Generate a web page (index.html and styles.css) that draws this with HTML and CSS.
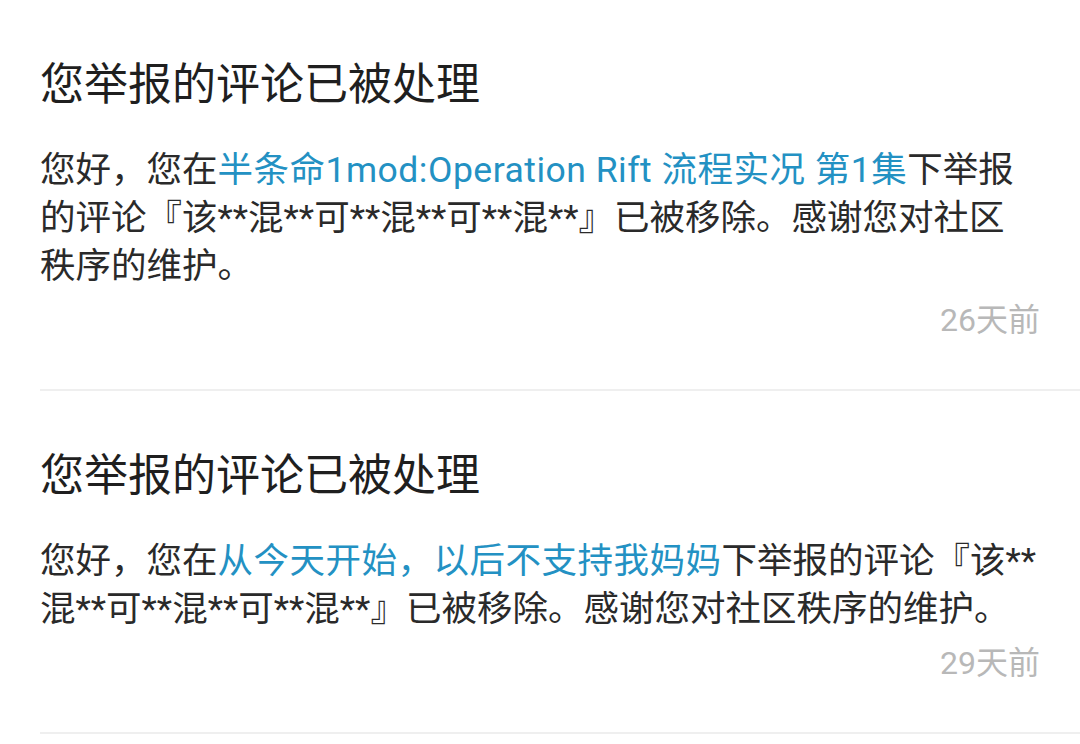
FILE: index.html
```html
<!DOCTYPE html>
<html lang="zh-CN">
<head>
<meta charset="utf-8">
<title>消息</title>
<link rel="stylesheet" href="styles.css">
</head>
<body>
<div class="list">
  <div class="item">
    <div class="title">您举报的评论已被处理</div>
    <div class="body">您好，您在<span class="link">半条命1mod:Operation Rift 流程实况 第1集</span>下举报的评论『该**混**可**混**可**混**』已被移除。感谢您对社区秩序的维护。</div>
    <div class="time">26天前</div>
  </div>
  <div class="item">
    <div class="title">您举报的评论已被处理</div>
    <div class="body">您好，您在<span class="link">从今天开始，以后不支持我妈妈</span>下举报的评论『该**混**可**混**可**混**』已被移除。感谢您对社区秩序的维护。</div>
    <div class="time">29天前</div>
  </div>
</div>
</body>
</html>
```

FILE: styles.css
```css
html, body {
  margin: 0;
  padding: 0;
  background: #ffffff;
}
body {
  font-family: Roboto, "Noto Sans CJK SC", sans-serif;
  color: #222222;
  width: 1080px;
  height: 744px;
  overflow: hidden;
}
.list {
  padding-left: 40px;
}
.item {
  padding: 51px 40px 49px 0;
  border-bottom: 2px solid #efefef;
}
.title {
  font-family: "Noto Sans CJK SC", sans-serif;
  font-size: 44px;
  line-height: 60px;
  color: #1f1f1f;
}
.body {
  margin-top: 35px;
  padding-right: 3px;
  font-size: 35.5px;
  line-height: 48px;
  color: #2a2a2a;
}
.link {
  color: #2391c3;
  letter-spacing: 0.5px;
}
.time {
  margin-top: 10px;
  text-align: right;
  font-size: 32px;
  line-height: 40px;
  color: #b8b8b8;
}
```
